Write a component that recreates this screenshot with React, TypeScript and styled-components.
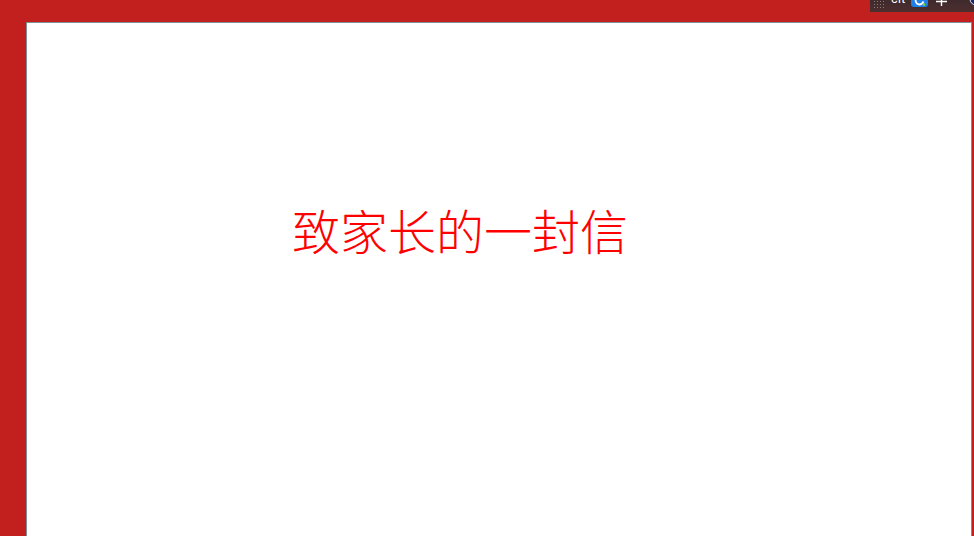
import React from "react";
import styled, { createGlobalStyle } from "styled-components";

const GlobalStyle = createGlobalStyle`
  html, body {
    margin: 0;
    height: 100%;
    overflow: hidden;
  }
  #root {
    height: 100%;
  }
`;

const Page = styled.div`
  position: relative;
  box-sizing: border-box;
  height: 536px;
  padding: 22px 2px 0 26px;
  background-color: #c21f1f;
`;

const Sheet = styled.main`
  box-sizing: border-box;
  height: 514px;
  padding: 184px 0 0 265px;
  background-color: #fff;
  border: 1px solid #7d8f96;
  border-bottom: none;
`;

const Title = styled.h1`
  margin: 0;
  font-family: "Liberation Serif", "Noto Sans CJK SC", serif;
  font-size: 48px;
  font-weight: 300;
  line-height: 54px;
  color: #ff0000;
  white-space: nowrap;
`;

const TrayBar = styled.div`
  position: absolute;
  top: 0;
  right: 0;
  width: 104px;
  height: 12px;
  display: flex;
  align-items: flex-start;
  overflow: hidden;
  background: linear-gradient(#3f2a2c, #4d2e2f);
`;

const GripDots = styled.svg`
  width: 10px;
  height: 9px;
  margin-left: 4px;
  flex: none;
`;

const TrayLabel = styled.span`
  width: 14px;
  margin-left: 7px;
  margin-top: -8px;
  font-family: "Liberation Sans", sans-serif;
  font-size: 13px;
  line-height: 13px;
  letter-spacing: 0.5px;
  color: #fff;
  flex: none;
`;

const BlueBadge = styled.svg`
  width: 17px;
  height: 7px;
  margin-left: 6px;
  flex: none;
`;

const PlusMark = styled.svg`
  width: 11px;
  height: 6px;
  margin-left: 8px;
  flex: none;
`;

const GlobeEdge = styled.svg`
  width: 6px;
  height: 6px;
  margin-left: 22px;
  flex: none;
`;

const dotColumns = [0, 3, 6, 9];
const dotRows = [1, 4, 7];

export default function App() {
  return (
    <>
      <GlobalStyle />
      <Page>
        <Sheet>
          <Title>致家长的一封信</Title>
        </Sheet>
        <TrayBar>
          <GripDots viewBox="0 0 10 9">
            <g fill="#8a7a7a">
              {dotRows.map((y) =>
                dotColumns.map((x) => <rect key={`${x}-${y}`} x={x} y={y} width="1" height="1" />)
              )}
            </g>
          </GripDots>
          <TrayLabel>cit</TrayLabel>
          <BlueBadge viewBox="0 0 17 7">
            <path d="M0 0H17V4Q17 7 14 7H3Q0 7 0 4Z" fill="#1f7fe8" />
            <path d="M4.5 0Q5 4.5 8.5 4.5Q11 4.5 12.5 1.5" fill="none" stroke="#fff" strokeWidth="1.8" />
            <circle cx="13" cy="4.5" r="1.3" fill="#6fdc3c" />
          </BlueBadge>
          <PlusMark viewBox="0 0 11 6">
            <path d="M0 1.5H11M5.5 0V6" stroke="#fff" strokeWidth="1.4" fill="none" />
          </PlusMark>
          <GlobeEdge viewBox="0 0 6 6">
            <circle cx="7" cy="-1" r="6" fill="#1b2a6b" stroke="#dfe6f2" strokeWidth="1" />
          </GlobeEdge>
        </TrayBar>
      </Page>
    </>
  );
}
